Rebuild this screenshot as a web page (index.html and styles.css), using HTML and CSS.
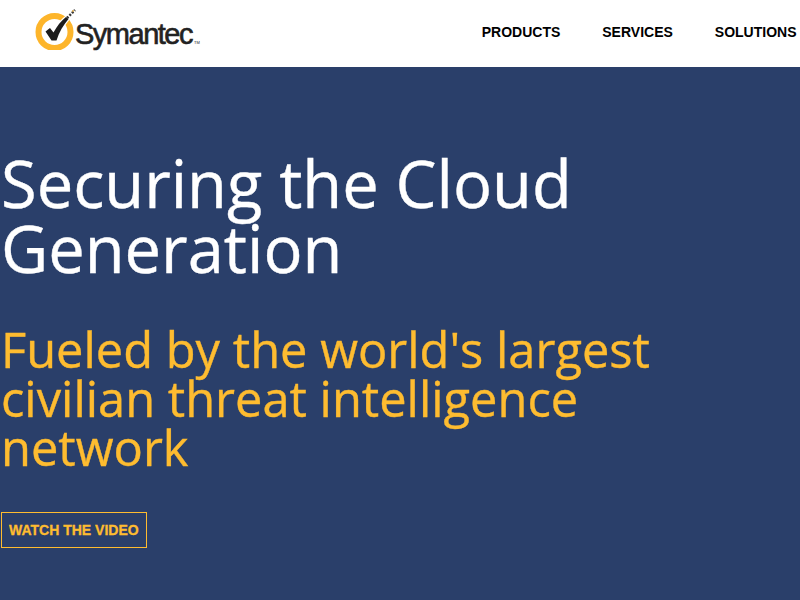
FILE: index.html
```html
<!DOCTYPE html>
<html lang="en">
<head>
<meta charset="utf-8">
<title>Symantec</title>
<link rel="stylesheet" href="styles.css">
</head>
<body>
<header class="topbar">
  <a class="logo" href="#">
    <svg class="logo-mark" width="44" height="42" viewBox="0 0 44 42" aria-hidden="true">
      <circle cx="20.500" cy="24" r="16" fill="none" stroke="#fdb52b" stroke-width="6"/>
      <path class="tick-halo" d="M11.500 23.500 L16 20 L19.500 24.500 C23 18 27 13 32 9 L34.500 11 C29.500 17 25 24 22.500 32.500 L17.500 32.500 Z"/>
      <path class="tick" d="M11.500 23.500 L16 20 L19.500 24.500 C23 18 27 13 32 9 L34.500 11 C29.500 17 25 24 22.500 32.500 L17.500 32.500 Z"/>
      <path class="spark" d="M33 10 L41 2"/>
      <circle cx="39" cy="3" r="1" fill="#d9a544"/>
    </svg>
    <span class="logo-text">Symantec</span><span class="logo-tm">TM</span>
  </a>
  <nav class="nav">
    <a href="#">PRODUCTS</a>
    <a href="#">SERVICES</a>
    <a href="#">SOLUTIONS</a>
  </nav>
</header>
<main class="hero">
  <h1>Securing the Cloud Generation</h1>
  <h2>Fueled by the world's largest civilian threat intelligence network</h2>
  <a class="cta" href="#">WATCH THE VIDEO</a>
</main>
</body>
</html>
```
FILE: styles.css
```css
* { box-sizing: border-box; }
html, body { margin: 0; height: 600px; overflow: hidden; }
body { background: #2a3f6a; font-family: "Liberation Sans", Arial, sans-serif; }
a { text-decoration: none; color: inherit; }
.topbar {
  height: 67px;
  background: #fff;
  display: flex;
  align-items: flex-start;
  justify-content: space-between;
  padding-left: 34px;
  overflow: hidden;
}
.logo { display: flex; align-items: flex-start; padding-top: 8px; color: #222; }
.logo-mark { flex: none; margin-right: -3px; }
.tick { fill: #1c1c1c; }
.tick-halo { fill: #fff; stroke: #fff; stroke-width: 2.500px; }
.spark { fill: none; stroke: #3a3a3a; stroke-width: 2.500px; stroke-dasharray: 2 1.500; }
.logo-text {
  font-size: 29px;
  letter-spacing: -1.500px;
  line-height: 32px;
  margin-top: 10px;
  -webkit-text-stroke: 0.6px #222;
}
.logo-tm { font-size: 4px; line-height: 4px; margin-top: 33px; margin-left: 2px; }
.nav {
  display: flex;
  gap: 42px;
  padding-top: 24px;
  margin-right: 3.500px;
  font-size: 14px;
  line-height: 17px;
  font-weight: bold;
  color: #000;
}
.hero { color: #fff; padding: 84px 0 0 1px; }
h1 {
  margin: 0;
  width: 640px;
  font-family: "Open Sans", sans-serif;
  font-weight: 400;
  font-size: 65px;
  line-height: 65px;
  -webkit-text-stroke: 0.4px #fff;
}
h2 {
  margin: 44px 0 0;
  width: 680px;
  font-family: "Open Sans", sans-serif;
  font-weight: 400;
  font-size: 48.800px;
  line-height: 49px;
  color: #febc30;
  -webkit-text-stroke: 0.4px #febc30;
}
.cta {
  display: inline-block;
  margin-top: 40px;
  padding: 8px 7px;
  border: 1px solid #febc30;
  color: #febc30;
  font-size: 14px;
  line-height: 18px;
  font-weight: bold;
  -webkit-text-stroke: 0.3px #febc30;
}
```
